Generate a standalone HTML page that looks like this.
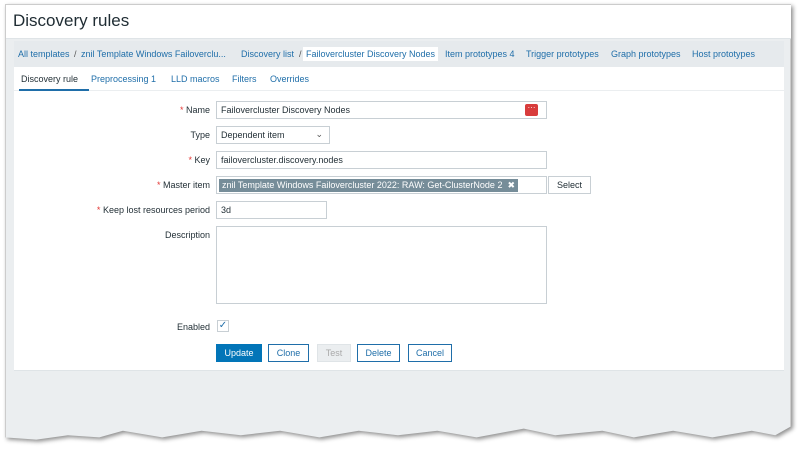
<!DOCTYPE html>
<html><head><style>
*{box-sizing:border-box;margin:0;padding:0}
body{width:800px;height:460px;background:#fff;font-family:"Liberation Sans",sans-serif;font-size:9px;color:#1f2c33;position:relative;overflow:hidden}
.wrap{position:absolute;left:0;top:0;width:800px;height:460px;filter:drop-shadow(2px 2px 2px rgba(0,0,0,.45))}
.frame{position:absolute;left:5px;top:4px;width:786px;height:440px;background:#ebeef0;border:1px solid #ccc;
clip-path:polygon(0 0,100% 0,100% 96%,98% 98%,95% 97%,90% 98.5%,85% 97%,80% 98.5%,76% 97%,70% 98%,66% 96.5%,60% 98.5%,55% 97%,50% 98%,45% 97%,40% 98.5%,35% 97%,30% 98%,25% 97%,20% 98.5%,15% 97%,12% 98.5%,8% 98%,4% 99%,0 98.5%)}
.hdr{position:absolute;left:0;top:0;width:786px;height:34px;background:#fff;border-bottom:1px solid #dfe4e7}
.hdr h1{font-weight:normal;font-size:17px;position:absolute;left:7px;top:6px;color:#1f2c33}
.bc{position:absolute;left:8px;top:36px;width:770px;height:26px;background:#e6eaed}
.bc span{position:absolute;top:8px;color:#1f6ea9;font-size:9px;white-space:nowrap}
.bc .sep{color:#555}
.cur{background:#fff;padding:2px 3px;top:6px!important}
.gr{color:#777}
.main{position:absolute;left:8px;top:62px;width:770px;height:304px;background:#fff;border-bottom:1px solid #dfe4e7}
.tabs{position:absolute;left:0;top:0;width:770px;height:24px;border-bottom:1px solid #ebeef0}
.tabs span{position:absolute;top:7px;color:#1f6ea9}
.lbl{position:absolute;right:574px;text-align:right;white-space:nowrap}
.r{color:#e33734}
.in{position:absolute;left:202px;height:18px;border:1px solid #c8cfd4;background:#fff;padding:3px 4px;white-space:nowrap}
.btn{position:absolute;top:277px;height:18px;border:1px solid #1f6ea9;color:#1f6ea9;background:#fff;text-align:center;line-height:16px}
</style></head><body>
<div class="wrap">
<div class="frame">
<div class="hdr"><h1>Discovery rules</h1></div>
<div class="bc">
<span style="left:4px">All templates</span><span class="sep" style="left:60px">/</span>
<span style="left:67px">znil Template Windows Failoverclu...</span>
<span style="left:227px">Discovery list</span><span class="sep" style="left:285px">/</span>
<span class="cur" style="left:289px">Failovercluster Discovery Nodes</span>
<span style="left:431px">Item prototypes <span class="gr" style="position:static">4</span></span>
<span style="left:512px">Trigger prototypes</span>
<span style="left:597px">Graph prototypes</span>
<span style="left:678px">Host prototypes</span>
</div>
<div class="main">
<div class="tabs">
<span style="left:7px;color:#1f2c33">Discovery rule</span>
<div style="position:absolute;left:5px;top:22px;width:70px;height:2px;background:#1f6ea9"></div>
<span style="left:77px">Preprocessing <span class="gr" style="position:static">1</span></span>
<span style="left:157px">LLD macros</span>
<span style="left:218px">Filters</span>
<span style="left:256px">Overrides</span>
</div>
<div class="lbl" style="top:38px"><span class="r">*</span> Name</div>
<div class="in" style="top:34px;width:331px">Failovercluster Discovery Nodes<div style="position:absolute;right:8px;top:2px;width:13px;height:12px;background:#d83c3c;border-radius:2px;color:#fff;font-size:8px;line-height:8px;text-align:center">···</div></div>
<div class="lbl" style="top:63px">Type</div>
<div class="in" style="top:59px;width:114px">Dependent item<span style="position:absolute;right:6px;top:2px;color:#555">⌄</span></div>
<div class="lbl" style="top:88px"><span class="r">*</span> Key</div>
<div class="in" style="top:84px;width:331px">failovercluster.discovery.nodes</div>
<div class="lbl" style="top:113px"><span class="r">*</span> Master item</div>
<div class="in" style="top:109px;width:331px;padding:2px"><span style="background:#768d99;color:#fff;padding:1px 3px;display:inline-block">znil Template Windows Failovercluster 2022: RAW: Get-ClusterNode 2 &nbsp;✖</span></div>
<div class="in" style="top:109px;left:534px;width:43px;text-align:center;border-color:#c8cfd4">Select</div>
<div class="lbl" style="top:138px"><span class="r">*</span> Keep lost resources period</div>
<div class="in" style="top:134px;width:111px">3d</div>
<div class="lbl" style="top:163px">Description</div>
<div class="in" style="top:159px;width:331px;height:78px"></div>
<div class="lbl" style="top:255px">Enabled</div>
<div style="position:absolute;left:203px;top:253px;width:12px;height:12px;border:1px solid #c8cfd4;color:#1f6ea9;font-size:10px;line-height:10px;text-align:center">✓</div>
<div class="btn" style="left:202px;width:46px;background:#0275b8;color:#fff;border-color:#0275b8">Update</div>
<div class="btn" style="left:254px;width:41px">Clone</div>
<div class="btn" style="left:303px;width:34px;border-color:#dfe4e7;background:#ebeef0;color:#aaa">Test</div>
<div class="btn" style="left:343px;width:43px">Delete</div>
<div class="btn" style="left:394px;width:44px">Cancel</div>
</div>
</div>
</div>
</body></html>
